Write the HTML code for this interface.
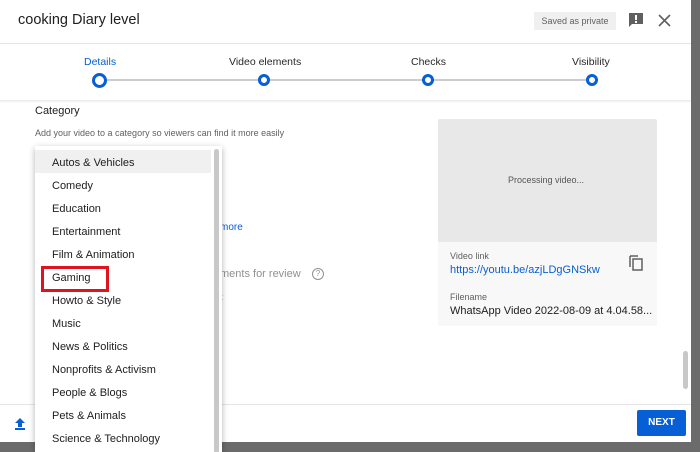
<!DOCTYPE html><html style="overflow:hidden;width:700px;height:452px"><head><style>
body{margin:0;width:700px;height:452px;background:#6b6b6b;position:relative;overflow:hidden;font-family:"Liberation Sans",sans-serif;}
.dlg{position:absolute;left:0;top:0;width:691px;height:442px;background:#fff;}
.a{position:absolute;white-space:nowrap;}
.step{font-size:10.5px;color:#282828;}
.dot{position:absolute;width:8px;height:8px;border:3px solid #065fd4;border-radius:50%;background:#fff;}
.item{position:absolute;left:17px;font-size:11px;color:#202020;}
</style></head><body>
<div class="dlg">
<div class="a" style="left:18px;top:12px;font-size:14.5px;color:#202020">cooking Diary level</div>
<div class="a" style="left:534px;top:12px;width:82px;height:18px;background:#f0f0f0;font-size:9px;color:#606060;line-height:18px;text-align:center">Saved as private</div>
<svg class="a" style="left:628px;top:12px" width="16" height="16" viewBox="0 0 16 16"><path d="M1 1h14v11H4l-3 3z" fill="#606060"/><rect x="7" y="3" width="2" height="5" fill="#fff"/><rect x="7" y="9" width="2" height="2" fill="#fff"/></svg>
<svg class="a" style="left:658px;top:14px" width="13" height="13" viewBox="0 0 13 13"><path d="M1 1L12 12M12 1L1 12" stroke="#606060" stroke-width="1.6"/></svg>
<div class="a" style="left:0;top:43px;width:691px;height:1px;background:#e5e5e5"></div>
<div class="a step" style="left:84px;top:56px;color:#065fd4">Details</div>
<div class="a step" style="left:229px;top:56px">Video elements</div>
<div class="a step" style="left:411px;top:56px">Checks</div>
<div class="a step" style="left:572px;top:56px">Visibility</div>
<div class="a" style="left:100px;top:79px;width:492px;height:2px;background:#ccc"></div>
<div class="dot" style="left:92px;top:73px;width:9px;height:9px"></div>
<div class="dot" style="left:258px;top:74px;width:6px;height:6px"></div>
<div class="dot" style="left:422px;top:74px;width:6px;height:6px"></div>
<div class="dot" style="left:586px;top:74px;width:6px;height:6px"></div>
<div class="a" style="left:0;top:100px;width:691px;height:3px;background:linear-gradient(#e8e8e8,#fff)"></div>
<div class="a" style="left:35px;top:105px;font-size:11px;color:#202020">Category</div>
<div class="a" style="left:35px;top:128px;font-size:9px;color:#606060">Add your video to a category so viewers can find it more easily</div>
<div class="a" style="left:220px;top:222px;font-size:10px;color:#065fd4">more</div>
<div class="a" style="left:220px;top:268px;font-size:11px;color:#909090">ments for review</div>
<div class="a" style="left:312px;top:268px;width:10px;height:10px;border:1px solid #909090;border-radius:50%;font-size:8px;color:#909090;text-align:center;line-height:10px">?</div>
<div class="a" style="left:220px;top:292px;font-size:9px;color:#065fd4">t</div>
<div class="a" style="left:438px;top:119px;width:219px;height:123px;background:#e8e8e8;border-radius:2px 2px 0 0"></div>
<div class="a" style="left:438px;top:242px;width:219px;height:84px;background:#f8f8f8"></div>
<div class="a" style="left:508px;top:175px;font-size:9px;color:#555">Processing video...</div>
<div class="a" style="left:450px;top:251px;font-size:9px;color:#606060">Video link</div>
<div class="a" style="left:450px;top:264px;font-size:11px;color:#065fd4">https://youtu.be/azjLDgGNSkw</div>
<svg class="a" style="left:628px;top:254px" width="16" height="17" viewBox="0 0 16 17"><path d="M2 2v11M2 2h8" stroke="#606060" stroke-width="1.5" fill="none"/><rect x="5" y="5" width="9" height="11" fill="none" stroke="#606060" stroke-width="1.5"/></svg>
<div class="a" style="left:450px;top:292px;font-size:9px;color:#606060">Filename</div>
<div class="a" style="left:450px;top:305px;font-size:11px;color:#202020">WhatsApp Video 2022-08-09 at 4.04.58...</div>
<div class="a" style="left:683px;top:351px;width:5px;height:38px;background:#c8c8c8;border-radius:3px"></div>
<div class="a" style="left:0;top:404px;width:691px;height:1px;background:#e5e5e5"></div>
<svg class="a" style="left:14px;top:417px" width="12" height="13" viewBox="0 0 12 13"><path d="M6 1L1 6h3v4h4V6h3z" fill="#065fd4"/><rect x="1" y="11" width="10" height="2" fill="#065fd4"/></svg>
<div class="a" style="left:637px;top:410px;width:49px;height:26px;background:#065fd4;color:#fff;font-size:10px;font-weight:bold;line-height:26px;text-align:center;border-radius:2px">NEXT</div>
</div>
<div class="a" style="left:35px;top:146px;width:187px;height:306px;background:#fff;box-shadow:0 2px 6px rgba(0,0,0,.3);overflow:hidden">
<div class="a" style="left:0;top:4px;width:176px;height:23px;background:#f0f0f0"></div>
<div class="a" style="left:179px;top:3px;width:5px;height:310px;background:#c8c8c8;border-radius:3px"></div>
<div class="item" style="top:11px">Autos &amp; Vehicles</div>
<div class="item" style="top:34px">Comedy</div>
<div class="item" style="top:57px">Education</div>
<div class="item" style="top:80px">Entertainment</div>
<div class="item" style="top:103px">Film &amp; Animation</div>
<div class="item" style="top:126px">Gaming</div>
<div class="item" style="top:149px">Howto &amp; Style</div>
<div class="item" style="top:172px">Music</div>
<div class="item" style="top:195px">News &amp; Politics</div>
<div class="item" style="top:218px">Nonprofits &amp; Activism</div>
<div class="item" style="top:241px">People &amp; Blogs</div>
<div class="item" style="top:264px">Pets &amp; Animals</div>
<div class="item" style="top:287px">Science &amp; Technology</div>
<div class="a" style="left:6px;top:120px;width:62px;height:20px;border:3px solid #e0141e"></div>
</div>
</body></html>
